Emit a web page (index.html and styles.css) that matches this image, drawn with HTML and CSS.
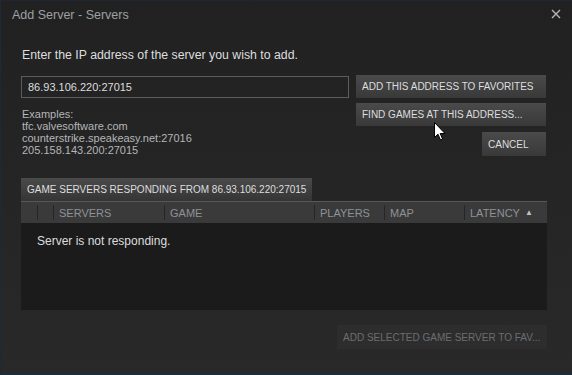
FILE: index.html
```html
<!DOCTYPE html>
<html>
    <head>
        <title>Add Server - Servers</title>
        <link rel="stylesheet" href="styles.css">
    </head>
    <body>
        <div class="dialog">
            <div class="titlebar">
                <span class="title">Add Server - Servers</span>
                <button class="close-btn" aria-label="Close">
                    <svg viewBox="0 0 10 10" width="10" height="10">
                        <path d="M1 1L9 9M9 1L1 9" stroke="#b5b5b5" stroke-width="1.4" />
                    </svg>
                </button>
            </div>

            <div class="content">
                <div class="prompt">Enter the IP address of the server you wish to add.</div>

                <div class="entry">
                    <div class="entry-left">
                        <input type="text" class="address" value="86.93.106.220:27015" />
                        <div class="examples">
                            Examples:<br />
                            tfc.valvesoftware.com<br />
                            counterstrike.speakeasy.net:27016<br />
                            205.158.143.200:27015
                        </div>
                    </div>
                    <div class="entry-buttons">
                        <button class="btn btn-wide">ADD THIS ADDRESS TO FAVORITES</button>
                        <button class="btn btn-wide">FIND GAMES AT THIS ADDRESS...</button>
                        <button class="btn btn-cancel">CANCEL</button>
                    </div>
                </div>

                <div class="tab">GAME SERVERS RESPONDING FROM 86.93.106.220:27015</div>
                <div class="list">
                    <div class="list-header">
                        <div class="col col-lock"></div>
                        <div class="col col-fav"></div>
                        <div class="col col-name">SERVERS</div>
                        <div class="col col-game">GAME</div>
                        <div class="col col-players">PLAYERS</div>
                        <div class="col col-map">MAP</div>
                        <div class="col col-latency">LATENCY <span class="sort">&#9650;</span></div>
                    </div>
                    <div class="list-body">
                        <div class="empty">Server is not responding.</div>
                    </div>
                </div>

                <div class="footer">
                    <button class="btn btn-disabled">ADD SELECTED GAME SERVER TO FAV...</button>
                </div>
            </div>

            <svg class="cursor" viewBox="0 0 12 19" width="12" height="19">
                <path d="M0.5 0.5L0.5 15.5L4 12.2L6.5 18L8.6 17.1L6.2 11.5L11 11.5Z"
                    fill="#ffffff" stroke="#000000" stroke-width="1" />
            </svg>
        </div>
    </body>
</html>
```

FILE: styles.css
```css
:root {
    --text-light: #dcdedf;
    --text-dim: #b4b6b8;
    --text-header: #8e9296;
    --btn-top: #4a4a4a;
    --btn-bottom: #393939;
}

body {
    margin: 0;
    width: 572px;
    height: 375px;
    overflow: hidden;
    font-family: "Liberation Sans", Arial, sans-serif;
    font-size: 12px;
    background-color: #232323;
}

.dialog {
    position: relative;
    box-sizing: border-box;
    width: 572px;
    height: 375px;
    background: linear-gradient(#212121, #292929);
    border-left: 1px solid #1d2a36;
    border-bottom: 2px solid #1c2d3d;
    border-top: 1px solid #1c2530;
}

.titlebar {
    display: flex;
    justify-content: space-between;
    align-items: center;
    height: 30px;
    padding: 0 8px 0 11px;
}

.title {
    color: #9ea0a2;
    font-size: 12.5px;
    margin-top: -3px;
}

.close-btn {
    background: none;
    border: none;
    padding: 0;
    width: 16px;
    height: 16px;
    display: flex;
    align-items: center;
    justify-content: center;
    margin-top: -4px;
}

.content {
    padding: 17px 26px 0 20px;
}

.prompt {
    color: var(--text-light);
    padding-left: 1px;
    line-height: 14px;
    font-size: 12.3px;
}

.entry {
    display: flex;
    justify-content: space-between;
    margin-top: 13px;
}

.entry-left {
    width: 328px;
    padding-top: 1px;
}

.address {
    box-sizing: border-box;
    width: 328px;
    height: 22px;
    padding: 0 6px;
    border: 1px solid #5c5c5c;
    background-color: #232323;
    color: var(--text-light);
    font-family: inherit;
    font-size: 11px;
}

.examples {
    color: var(--text-dim);
    font-size: 11px;
    line-height: 12px;
    margin-top: 10px;
    padding-left: 1px;
}

.entry-buttons {
    display: flex;
    flex-direction: column;
    align-items: flex-end;
    gap: 5px;
}

.btn {
    box-sizing: border-box;
    border: none;
    height: 23px;
    padding: 0 6px;
    text-align: left;
    white-space: nowrap;
    overflow: hidden;
    font-family: inherit;
    font-size: 10px;
    color: var(--text-light);
    background: linear-gradient(var(--btn-top), var(--btn-bottom));
}

.btn-wide {
    width: 190px;
}

.btn-cancel {
    width: 64px;
    height: 24px;
    margin-top: 1px;
}

.tab {
    display: inline-block;
    margin-top: 22px;
    height: 23px;
    line-height: 23px;
    padding: 0 6px;
    font-size: 10px;
    color: var(--text-light);
    background: linear-gradient(#4a4a4a, #353535);
}

.list {
    width: 526px;
    border-top: 1px solid #585858;
}

.list-header {
    display: flex;
    height: 21px;
    background-color: #3a3a3a;
}

.col {
    box-sizing: border-box;
    display: flex;
    align-items: center;
    padding-left: 5px;
    color: var(--text-header);
    font-size: 11px;
    border-left: 1px solid #262626;
    margin: 3px 0;
}

.col-lock {
    width: 16px;
    border-left: none;
}

.col-fav {
    width: 16px;
}

.col-name {
    width: 111px;
}

.col-game {
    width: 150px;
}

.col-players {
    width: 70px;
}

.col-map {
    width: 80px;
}

.col-latency {
    flex: 1;
}

.sort {
    font-size: 8px;
    margin-left: 5px;
    color: #c0c0c0;
}

.list-body {
    height: 87px;
    background-color: #1b1b1b;
}

.empty {
    color: var(--text-light);
    font-size: 12px;
    padding: 11px 0 0 16px;
}

.footer {
    display: flex;
    justify-content: flex-end;
    width: 526px;
    margin-top: 15px;
}

.btn-disabled {
    width: 210px;
    height: 24px;
    background: #2d2d2d;
    color: #6a6e72;
}

.cursor {
    position: absolute;
    left: 433px;
    top: 121px;
}
```
